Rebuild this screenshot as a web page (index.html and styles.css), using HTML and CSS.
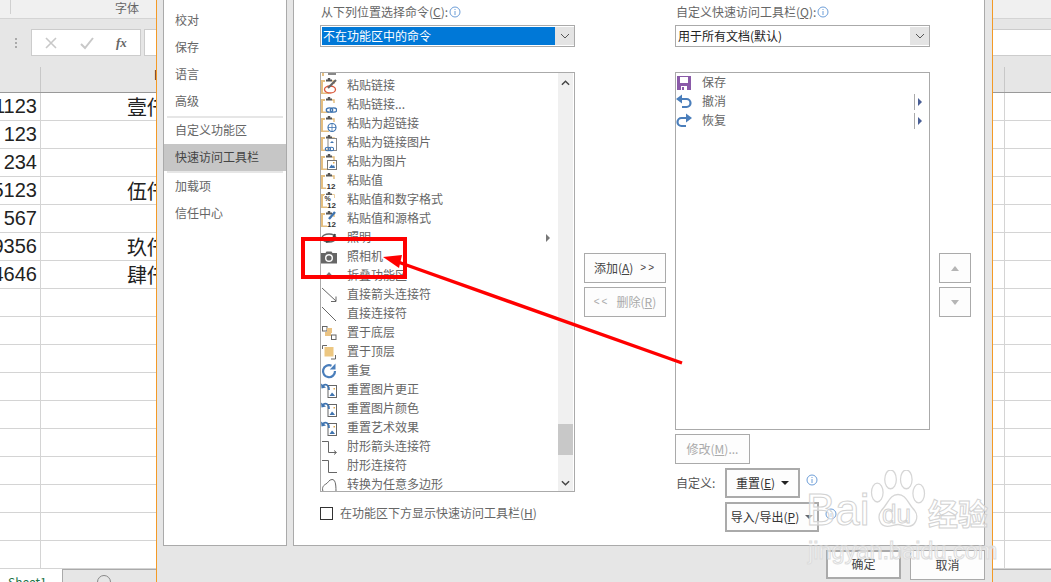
FILE: index.html
```html
<!DOCTYPE html>
<html lang="zh-CN">
<head>
<meta charset="utf-8">
<title>Excel 选项</title>
<link rel="stylesheet" href="styles.css">
</head>
<body>
<svg class="defs" width="0" height="0" aria-hidden="true">
  <symbol id="clip" viewBox="0 0 16 16"><path d="M4 3H1V15.500H8" fill="none" stroke="#e4be80" stroke-width="2"/><path d="M11 3h2v3" fill="none" stroke="#e4be80" stroke-width="1.500"/><path d="M5 3.500V1.500h1.800V0h2.400v1.500H11V3.500z" fill="#555"/></symbol>
  <symbol id="pic" viewBox="0 0 16 16"><rect x="6.500" y="6.500" width="9" height="9" fill="#fff" stroke="#777"/><path d="M8 14l2.500-3.500 1.500 1.500 1-1 1 3z" fill="#3f74b0"/><rect x="12" y="8" width="1.500" height="1.500" fill="#e2a84a"/></symbol>
  <symbol id="chain" viewBox="0 0 16 16"><ellipse cx="8.500" cy="13" rx="3.200" ry="2.200" fill="none" stroke="#3f74b0" stroke-width="1.300"/><ellipse cx="12.500" cy="13" rx="3.200" ry="2.200" fill="none" stroke="#3f74b0" stroke-width="1.300"/></symbol>
  <symbol id="reset" viewBox="0 0 16 16"><rect x="7" y="3.500" width="8.500" height="12" fill="#fff" stroke="#666"/><path d="M8.500 14l2.500-3.500 1.500 1.500 1.500 2z" fill="#3f74b0"/><rect x="12.500" y="6" width="1.500" height="1.500" fill="#e2a84a"/><path d="M8 8C8 3 5 1.500 2 3.500" fill="none" stroke="#3f74b0" stroke-width="1.800"/><path d="M0 1.500L.5 6.500L5 5.500z" fill="#3f74b0"/></symbol>
  <symbol id="info" viewBox="0 0 12 12"><circle cx="6" cy="6" r="5" fill="#fff" stroke="#6d9ed8"/><path d="M6 5v4M6 3v1" stroke="#6d9ed8"/></symbol>
  <symbol id="chev" viewBox="0 0 10 6"><path d="M1 1l4 4 4-4" fill="none" stroke="#555" stroke-width="1"/></symbol>
</svg>

<div class="stage">
  <div class="sheet">
    <div class="ribbon"><span class="launcher"></span><span class="group-name">字体</span></div>
    <div class="formula-bar">
      <span class="dots"></span>
      <div class="fx-box">
        <svg class="fx-icon" width="14" height="14" viewBox="0 0 14 14"><path d="M2 2l10 10M12 2L2 12" stroke="#c8c8c8" stroke-width="1.600"/></svg>
        <svg class="fx-icon" width="14" height="14" viewBox="0 0 14 14"><path d="M1 8l4 4 8-10" fill="none" stroke="#c8c8c8" stroke-width="2"/></svg>
        <span class="fx-text">fx</span>
      </div>
      <div class="fx-input"></div>
    </div>
    <div class="col-head"><span class="head-a"></span><span class="head-b">E</span></div>
    <div class="row"><span class="cell-a">1123</span><span class="cell-b">壹仟</span></div>
    <div class="row"><span class="cell-a">123</span><span class="cell-b"></span></div>
    <div class="row"><span class="cell-a">234</span><span class="cell-b"></span></div>
    <div class="row"><span class="cell-a">5123</span><span class="cell-b">伍仟</span></div>
    <div class="row"><span class="cell-a">567</span><span class="cell-b"></span></div>
    <div class="row"><span class="cell-a">9356</span><span class="cell-b">玖仟</span></div>
    <div class="row"><span class="cell-a">4646</span><span class="cell-b">肆仟</span></div>
    <div class="row"><span class="cell-a"></span><span class="cell-b"></span></div>
    <div class="row"><span class="cell-a"></span><span class="cell-b"></span></div>
    <div class="row"><span class="cell-a"></span><span class="cell-b"></span></div>
    <div class="row"><span class="cell-a"></span><span class="cell-b"></span></div>
    <div class="row"><span class="cell-a"></span><span class="cell-b"></span></div>
    <div class="row"><span class="cell-a"></span><span class="cell-b"></span></div>
    <div class="row"><span class="cell-a"></span><span class="cell-b"></span></div>
    <div class="row"><span class="cell-a"></span><span class="cell-b"></span></div>
    <div class="row"><span class="cell-a"></span><span class="cell-b"></span></div>
    <div class="row"><span class="cell-a"></span><span class="cell-b"></span></div>
    <div class="tabs"><span class="tab">Sheet1</span><div class="tab-rest"><span class="add-tab"></span></div></div>
  </div>

  <div class="dialog">
    <div class="panels">
      <nav class="nav">
        <a class="nav-item first">校对</a>
        <a class="nav-item">保存</a>
        <a class="nav-item">语言</a>
        <a class="nav-item">高级</a>
        <hr class="nav-sep">
        <a class="nav-item">自定义功能区</a>
        <a class="nav-item active">快速访问工具栏</a>
        <hr class="nav-sep tight">
        <a class="nav-item">加载项</a>
        <a class="nav-item">信任中心</a>
      </nav>
      <main class="main">
        <section class="col">
          <div class="label">从下列位置选择命令(<u>C</u>):<svg class="info" width="12" height="12"><use href="#info"/></svg></div>
          <div class="select"><span class="select-value selected">不在功能区中的命令</span><span class="select-btn"><svg width="10" height="6"><use href="#chev"/></svg></span></div>
          <div class="list tall">
            <div class="items">
              <div class="peek"></div>
              <div class="item"><svg class="ico" viewBox="0 0 16 16"><use href="#clip" width="16" height="16"/><ellipse cx="9" cy="11.500" rx="5.500" ry="3.500" fill="none" stroke="#d9573a" stroke-width="1.300"/><path d="M15 2L7 10" stroke="#666" stroke-width="2.200"/></svg><span>粘贴链接</span></div>
              <div class="item"><svg class="ico" viewBox="0 0 16 16"><use href="#clip" width="16" height="16"/><use href="#chain" width="16" height="16"/></svg><span>粘贴链接...</span></div>
              <div class="item"><svg class="ico" viewBox="0 0 16 16"><use href="#clip" width="16" height="16"/><circle cx="11" cy="11.500" r="4" fill="#fff" stroke="#3f74b0" stroke-width="1.200"/><path d="M7 11.500h8M11 7.500v8" stroke="#3f74b0" stroke-width=".8"/></svg><span>粘贴为超链接</span></div>
              <div class="item"><svg class="ico" viewBox="0 0 16 16"><use href="#clip" width="16" height="16"/><rect x="7" y="3.500" width="8.500" height="12" fill="#fff" stroke="#888"/><path d="M9 8l2-2 2 2z" fill="#3f74b0"/><use href="#chain" width="13" height="13" x="0" y="3.500"/></svg><span>粘贴为链接图片</span></div>
              <div class="item"><svg class="ico" viewBox="0 0 16 16"><use href="#clip" width="16" height="16"/><use href="#pic" width="16" height="16"/></svg><span>粘贴为图片</span></div>
              <div class="item"><svg class="ico" viewBox="0 0 16 16"><use href="#clip" width="16" height="16"/><rect x="5" y="7" width="11" height="9" fill="#fff"/><text class="num" x="5.500" y="15.500">12</text></svg><span>粘贴值</span></div>
              <div class="item"><svg class="ico" viewBox="0 0 16 16"><use href="#clip" width="16" height="16"/><rect x="3" y="3" width="10" height="6" fill="#fff"/><text class="pct" x="3.500" y="9">%</text><rect x="6" y="9" width="10" height="7" fill="#fff"/><text class="num" x="6" y="15.800">12</text></svg><span>粘贴值和数字格式</span></div>
              <div class="item"><svg class="ico" viewBox="0 0 16 16"><use href="#clip" width="16" height="16"/><path d="M14 1L8 8" stroke="#3f74b0" stroke-width="2.400"/><rect x="6" y="9" width="10" height="7" fill="#fff"/><text class="num" x="6" y="15.800">12</text></svg><span>粘贴值和源格式</span></div>
              <div class="item"><svg class="ico" viewBox="0 0 16 16"><ellipse cx="8" cy="8" rx="7" ry="4" fill="none" stroke="#666" stroke-width="1.300"/><path d="M5 12C8 11 13 9 14 4" fill="none" stroke="#444" stroke-width="2"/></svg><span>照明</span><i class="sub-arrow"></i></div>
              <div class="item"><svg class="ico" viewBox="0 0 16 16"><path d="M0 4h4.500l1-1.500h5L11.500 4H16v10.500H0z" fill="#666"/><circle cx="8" cy="9" r="3.300" fill="none" stroke="#fff" stroke-width="1.400"/></svg><span>照相机</span></div>
              <div class="item"><svg class="ico" viewBox="0 0 16 16"><path d="M8 4l4.500 5h-9z" fill="#777"/></svg><span>折叠功能区</span></div>
              <div class="item"><svg class="ico" viewBox="0 0 16 16"><path d="M1 1l14 13M15 9.500V14.500H10" fill="none" stroke="#666"/></svg><span>直接箭头连接符</span></div>
              <div class="item"><svg class="ico" viewBox="0 0 16 16"><path d="M1 1l14 14" fill="none" stroke="#666"/></svg><span>直接连接符</span></div>
              <div class="item"><svg class="ico" viewBox="0 0 16 16"><rect x="1.500" y="1.500" width="4.500" height="4.500" fill="#fff" stroke="#666"/><rect x="6" y="3" width="5" height="5" fill="#eac383"/><rect x="4" y="7" width="6" height="4" fill="#eac383"/><rect x="10.500" y="10" width="4.500" height="4.500" fill="#fff" stroke="#666"/></svg><span>置于底层</span></div>
              <div class="item"><svg class="ico" viewBox="0 0 16 16"><path d="M1.500 5V1.500H6M14.500 11V15H10" fill="none" stroke="#666"/><rect x="3.500" y="3" width="9" height="9.500" fill="#edc781"/></svg><span>置于顶层</span></div>
              <div class="item"><svg class="ico" viewBox="0 0 16 16"><path d="M10.500 2.800A6 6 0 1 0 14 8" fill="none" stroke="#4a7ebb" stroke-width="2.200"/><path d="M14.500 .5V6.500H8.800z" fill="#4a7ebb"/></svg><span>重复</span></div>
              <div class="item"><svg class="ico" viewBox="0 0 16 16"><use href="#reset" width="16" height="16"/></svg><span>重置图片更正</span></div>
              <div class="item"><svg class="ico" viewBox="0 0 16 16"><use href="#reset" width="16" height="16"/></svg><span>重置图片颜色</span></div>
              <div class="item"><svg class="ico" viewBox="0 0 16 16"><use href="#reset" width="16" height="16"/></svg><span>重置艺术效果</span></div>
              <div class="item"><svg class="ico" viewBox="0 0 16 16"><path d="M1 2.500H7.500V13.500H15M13 11.500l2.500 2-2.500 2" fill="none" stroke="#666"/></svg><span>肘形箭头连接符</span></div>
              <div class="item"><svg class="ico" viewBox="0 0 16 16"><path d="M1 2.500H7.500V14.500H16" fill="none" stroke="#666"/></svg><span>肘形连接符</span></div>
              <div class="item"><svg class="ico" viewBox="0 0 16 16"><path d="M2 14.500C.5 10 3 8 5 7S8 2.500 11 2.500 15 6 15 14.500z" fill="none" stroke="#666"/></svg><span>转换为任意多边形</span></div>
            </div>
            <div class="scrollbar">
              <svg class="sb-arrow" width="9" height="6" viewBox="0 0 10 6"><path d="M1 5l4-4 4 4" fill="none" stroke="#444" stroke-width="1.600"/></svg>
              <span class="sb-thumb"></span>
              <svg class="sb-arrow" width="9" height="6" viewBox="0 0 10 6"><path d="M1 1l4 4 4-4" fill="none" stroke="#444" stroke-width="1.600"/></svg>
            </div>
          </div>
          <label class="check-row"><span class="checkbox"></span><span>在功能区下方显示快速访问工具栏(<u>H</u>)</span></label>
        </section>

        <section class="mid">
          <div class="btn wide"><span>添加(<u>A</u>)</span><span class="chevs">&gt;&gt;</span></div>
          <div class="btn wide off"><span class="chevs">&lt;&lt;</span><span>删除(<u>R</u>)</span></div>
        </section>

        <section class="col">
          <div class="label">自定义快速访问工具栏(<u>Q</u>):<svg class="info" width="12" height="12"><use href="#info"/></svg></div>
          <div class="select"><span class="select-value">用于所有文档(默认)</span><span class="select-btn"><svg width="10" height="6"><use href="#chev"/></svg></span></div>
          <div class="list short">
            <div class="qat">
              <div class="qat-item"><svg class="ico" viewBox="0 0 16 16"><path d="M1 1h14v14H1z" fill="#8a5aa8"/><rect x="4" y="2" width="8" height="6" fill="#fff"/><rect x="5" y="11" width="6" height="4" fill="#fff"/><rect x="6" y="12" width="2" height="3" fill="#8a5aa8"/></svg><span>保存</span></div>
              <div class="qat-item"><svg class="ico" viewBox="0 0 16 16"><path d="M4 5h6.500a4 4 0 0 1 0 8H6" fill="none" stroke="#4a7ebb" stroke-width="2.200"/><path d="M6 .5V9.500L0 5z" fill="#4a7ebb"/></svg><span>撤消</span><i class="split"></i></div>
              <div class="qat-item"><svg class="ico" viewBox="0 0 16 16"><path d="M12 5H5.500a4 4 0 0 0 0 8H10" fill="none" stroke="#4a7ebb" stroke-width="2.200"/><path d="M10 .5V9.500L16 5z" fill="#4a7ebb"/></svg><span>恢复</span><i class="split"></i></div>
            </div>
          </div>
          <div class="btn modify off"><span>修改(<u>M</u>)...</span></div>
          <div class="custom-row">
            <span class="custom-label">自定义:</span>
            <div class="btn menu reset"><span>重置(<u>E</u>)</span><i class="caret"></i></div>
            <svg class="info-side" width="12" height="12"><use href="#info"/></svg>
          </div>
          <div class="custom-row second">
            <div class="btn menu port"><span>导入/导出(<u>P</u>)</span><i class="caret light"></i></div>
            <svg class="info-side" width="12" height="12"><use href="#info"/></svg>
          </div>
        </section>

        <section class="updown">
          <div class="btn square"><i class="tri up"></i></div>
          <div class="btn square"><i class="tri down"></i></div>
        </section>
      </main>
    </div>
    <div class="footer">
      <div class="btn foot primary">确定</div>
      <div class="btn foot">取消</div>
    </div>
  </div>

  <svg class="annotation" width="1051" height="582" viewBox="0 0 1051 582" aria-hidden="true">
    <rect x="303" y="239" width="102" height="38" fill="none" stroke="#ff0000" stroke-width="4"/>
    <path d="M682 363L398 262" stroke="#ff0000" stroke-width="3.400"/>
    <path d="M383 257L402 255L399 268z" fill="#ff0000"/>
  </svg>

  <div class="watermark" aria-hidden="true">
    <svg class="paw" width="58" height="62" viewBox="0 0 70 66" preserveAspectRatio="none"><g fill="rgba(255,255,255,.55)" stroke="#d6d6d6" stroke-width="1.500"><ellipse cx="10" cy="24" rx="7" ry="10"/><ellipse cx="26" cy="10" rx="7" ry="10"/><ellipse cx="45" cy="10" rx="7" ry="10"/><ellipse cx="60" cy="25" rx="7" ry="10"/><path d="M35 26c10 0 12 10 20 17 6 7 1 17-8 17-5 0-8-2-12-2s-8 2-13 2c-9 0-13-10-7-17 8-7 10-17 20-17z"/></g></svg>
    <span class="wm-bai">Bai</span>
    <span class="wm-du">du</span>
    <span class="wm-cn">经验</span>
    <span class="wm-url">jingyan.baidu.com</span>
  </div>
</div>
</body>
</html>
```
FILE: styles.css
```css
* { box-sizing: border-box; }
html, body { margin: 0; padding: 0; height: 100%; overflow: hidden; background: #fff; }
body { font: 12px/1.2 "Noto Sans CJK SC", "Liberation Sans", sans-serif; color: #666; }
.defs { position: absolute; }
.stage { position: relative; width: 1051px; height: 582px; overflow: hidden; }

/* spreadsheet behind the dialog */
.sheet { display: flex; flex-direction: column; height: 582px; }
.ribbon { position: relative; height: 19px; background: #f0f0f0; border-bottom: 1px solid #d4d4d4; flex: none; }
.launcher { display: block; width: 11px; height: 14px; border-right: 1px solid #d0d0d0; }
.group-name { position: absolute; left: 115px; top: 0; line-height: 16px; font-size: 12px; color: #666; }
.formula-bar { display: flex; height: 37px; padding-top: 10px; background: #e6e6e6; flex: none; }
.dots { width: 2px; height: 10px; margin: 9px 13px 0 15px; background: repeating-linear-gradient(#aaa 0 2px, transparent 2px 4px); }
.fx-box { display: flex; align-items: center; width: 110px; height: 27px; margin-left: 1px; padding-left: 12px; gap: 22px; background: #fff; border: 1px solid #ccc; }
.fx-icon { flex: none; }
.fx-text { font: italic bold 13px "Liberation Serif", serif; color: #666; }
.fx-input { flex: 1; margin-left: 3px; height: 27px; background: #fff; border: 1px solid #ccc; border-right: 0; }
.col-head { display: flex; height: 37px; padding-top: 11px; background: #e6e6e6; border-bottom: 1px solid #999; flex: none; }
.head-a { width: 41px; border-right: 1px solid #c8c8c8; }
.head-b { width: 964px; border-right: 1px solid #c8c8c8; padding-left: 113px; line-height: 26px; font: 14px "Liberation Sans", sans-serif; color: #333; }
.row { display: flex; height: 28px; border-bottom: 1px solid #d4d4d4; flex: none; }
.cell-a { width: 41px; padding-right: 3px; border-right: 1px solid #d4d4d4; text-align: right; font: 20px/27px "Liberation Sans", sans-serif; color: #222; overflow: hidden; white-space: nowrap; direction: rtl; }
.cell-b { width: 964px; padding-left: 86px; border-right: 1px solid #d4d4d4; font: 20px/27px "Noto Sans CJK SC", sans-serif; color: #222; }
.tabs { display: flex; flex: 1; }
.tab { width: 62px; padding: 6px 0 0 8px; font-size: 12px; line-height: 14px; color: #217346; }
.tab-rest { flex: 1; background: #e6e6e6; border-top: 1px solid #aaa; border-left: 1px solid #aaa; }
.add-tab { display: block; width: 14px; height: 14px; margin: 5px 0 0 34px; border: 1px solid #888; border-radius: 50%; }

/* dialog */
.dialog { position: absolute; left: 156px; top: 0; width: 837px; height: 582px; padding: 0 7px 0 6px; background: #e6e6e6; border-left: 1px solid #f39a26; border-right: 1px solid #f39a26; display: flex; flex-direction: column; }
.panels { display: flex; gap: 6px; height: 546px; flex: none; }
.nav { width: 124px; display: flex; flex-direction: column; background: #fff; border: 1px solid #aaa; border-top: 0; }
.nav-item { display: flex; align-items: center; height: 27px; padding-left: 11px; color: #666; flex: none; }
.nav-item.first { margin-top: 7px; }
.nav-item.active { background: #c6c6c6; color: #444; }
.nav-sep { height: 2px; margin: 1px 3px -1px; border: 0; background: #e6e6e6; flex: none; }
.nav-sep.tight { margin: 0 3px; }
.main { flex: 1; display: flex; padding-left: 26px; background: #fff; border: 1px solid #aaa; border-top: 0; }
.col { width: 255px; flex: none; display: flex; flex-direction: column; }
.label { display: flex; align-items: center; height: 25px; white-space: pre; padding-left: 1px; color: #666; }
.info { margin-left: 1px; margin-top: -1px; }
.select { display: flex; height: 22px; padding: 1px 0 1px 1px; border: 1px solid #aaa; flex: none; }
.select-value { flex: 1; line-height: 17px; padding-left: 1px; color: #222; }
.select-value.selected { background: #0078d7; color: #fff; }
.select-btn { display: flex; align-items: center; justify-content: center; width: 19px; background: #e4e4e4; }
.list { display: flex; margin-top: 25px; border: 1px solid #aaa; flex: none; overflow: hidden; }
.list.tall { height: 420px; }
.list.short { height: 358px; }
.items { flex: 1; min-width: 0; }
.peek { width: 16px; height: 3px; margin-left: 1px; border-left: 2px solid #e4be80; background: linear-gradient(#888, #888) 4px 0 / 8px 2px no-repeat; }
.item { display: flex; align-items: center; height: 19px; }
.ico { width: 16px; height: 16px; margin-right: 10px; flex: none; overflow: visible; }
.num { font: bold 8px "Liberation Sans", sans-serif; fill: #333; }
.pct { font: bold 7px "Liberation Sans", sans-serif; fill: #333; }
.sub-arrow { width: 0; height: 0; margin-left: auto; margin-right: 8px; border-left: 4px solid #777; border-top: 4px solid transparent; border-bottom: 4px solid transparent; }
.scrollbar { position: relative; width: 15px; margin-right: 1px; background: #f0f0f0; display: flex; flex-direction: column; align-items: center; justify-content: space-between; padding: 7px 0 5px; flex: none; }
.sb-thumb { position: absolute; left: 0; right: 0; top: 351px; height: 31px; background: #c8c8c8; }
.check-row { display: flex; align-items: center; gap: 7px; margin-top: 15px; height: 13px; color: #666; }
.checkbox { width: 13px; height: 13px; border: 1px solid #333; flex: none; }
.mid { width: 100px; flex: none; display: flex; flex-direction: column; gap: 4px; padding: 253px 9px 0; }
.btn { display: flex; align-items: center; justify-content: center; background: #fdfdfd; border: 1px solid #aaa; color: #444; white-space: pre; flex: none; }
.btn.off { color: #aaa; }
.btn.wide { width: 82px; height: 30px; gap: 7px; }
.chevs { letter-spacing: 2px; font-family: "Liberation Sans", sans-serif; font-size: 10px; }
.qat { flex: 1; }
.qat-item { display: flex; align-items: center; height: 19px; }
.split { position: relative; margin-left: auto; margin-right: 14px; width: 1px; height: 16px; background: #aaa; }
.split::after { content: ""; position: absolute; left: 4px; top: 4px; border-left: 4px solid #4a5f95; border-top: 4px solid transparent; border-bottom: 4px solid transparent; }
.modify { width: 75px; height: 30px; margin-top: 4px; }
.custom-row { display: flex; align-items: center; margin-top: 4px; height: 30px; }
.custom-row.second { padding-left: 50px; }
.custom-label { width: 50px; padding-left: 1px; color: #555; }
.menu { height: 30px; border: 2px solid #aaa; color: #333; gap: 6px; }
.reset { width: 75px; }
.port { width: 94px; }
.caret { width: 0; height: 0; border-top: 4px solid #222; border-left: 4px solid transparent; border-right: 4px solid transparent; }
.caret.light { border-top-color: #666; }
.info-side { margin: -7px 0 0 6px; }
.updown { display: flex; flex-direction: column; gap: 4px; width: 32px; margin-left: 9px; padding-top: 253px; flex: none; }
.square { width: 32px; height: 30px; }
.tri { width: 0; height: 0; border-left: 4px solid transparent; border-right: 4px solid transparent; }
.tri.up { border-bottom: 5px solid #b5b5b5; }
.tri.down { border-top: 5px solid #b5b5b5; }
.footer { display: flex; justify-content: flex-end; gap: 9px; padding-top: 4px; align-items: flex-start; }
.foot { width: 75px; height: 30px; color: #444; }
.foot.primary { height: 29px; border: 2px solid #aaa; }

/* overlays */
.annotation { position: absolute; left: 0; top: 0; pointer-events: none; }
.watermark { position: absolute; left: 800px; top: 465px; width: 251px; height: 117px; pointer-events: none; color: rgba(255,255,255,.55); -webkit-text-stroke: 1px #d2d2d2; font-family: "Liberation Sans", sans-serif; }
.paw { position: absolute; left: 69px; top: 5px; }
.wm-bai { position: absolute; left: 6px; top: 20px; font-size: 44px; line-height: 50px; }
.wm-du { position: absolute; left: 82px; top: 34px; font-size: 26px; line-height: 30px; }
.wm-cn { position: absolute; left: 128px; top: 27px; font: bold 30px/40px "Noto Sans CJK SC", sans-serif; }
.wm-url { position: absolute; left: 8px; top: 72px; font-size: 23.5px; line-height: 28px; white-space: nowrap; -webkit-text-stroke-color: #dcdcdc; }
```
